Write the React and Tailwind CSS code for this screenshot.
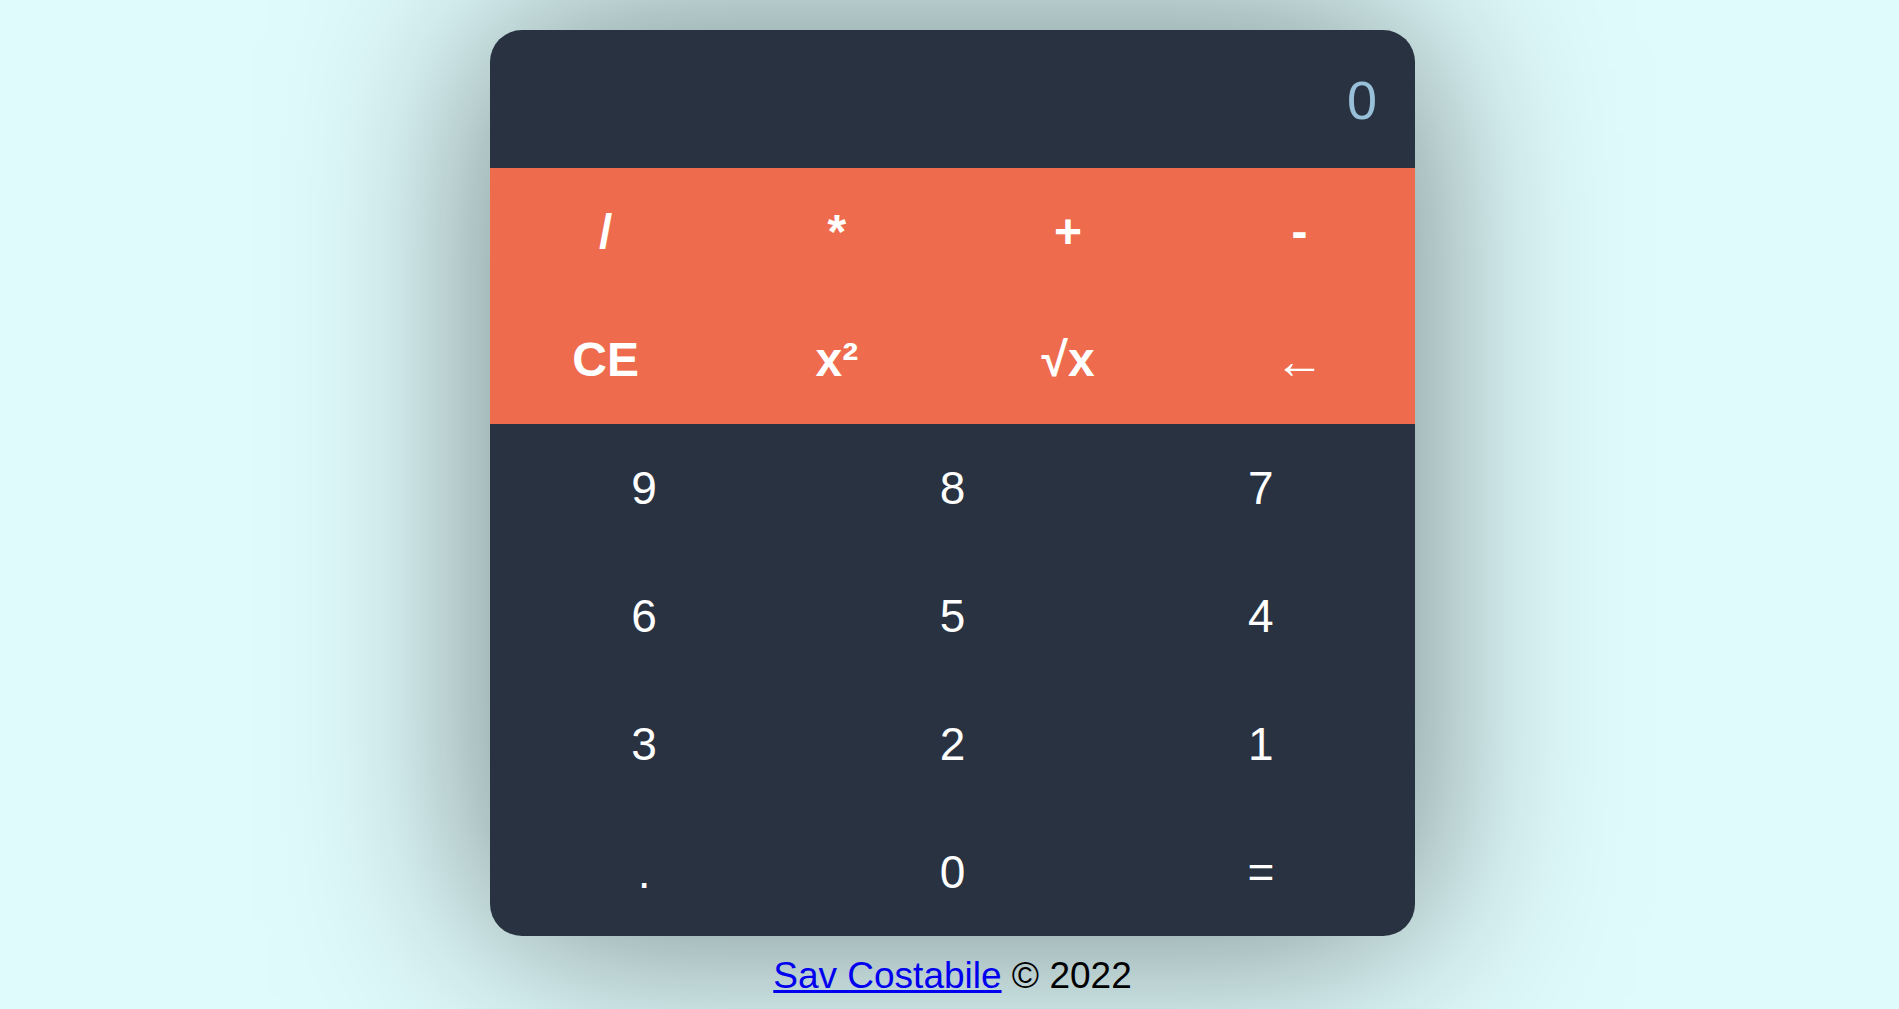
import React from "react";

const ops1 = ["/", "*", "+", "-"];
const ops2 = ["CE", "x²", "√x", "←"];
const digits = ["9", "8", "7", "6", "5", "4", "3", "2", "1", ".", "0", "="];

export default function App() {
  return (
    <div
      className="min-h-screen w-full bg-[#e0fbfc] overflow-hidden"
      style={{ fontFamily: '"Liberation Sans", Arial, sans-serif' }}
    >
      <div className="flex flex-col items-center pt-[30px] pl-[6px]">
        <div className="w-[925px] rounded-[32px] bg-[#293241] overflow-hidden shadow-[0_0_200px_rgba(0,0,0,0.5)]">
          <div className="h-[138px] flex items-center justify-end pr-[38px] pt-[2px]">
            <span className="text-[54px] leading-none text-[#98c1d9] font-normal">0</span>
          </div>
          <div className="bg-[#ee6c4d] grid grid-cols-4">
            {ops1.concat(ops2).map((o) => (
              <button
                key={o}
                className="h-[128px] flex items-center justify-center text-white font-bold text-[48px] leading-none"
              >
                {o === "←" ? (
                  <span className="font-normal text-[50px] pt-[2px]">←</span>
                ) : (
                  o
                )}
              </button>
            ))}
          </div>
          <div className="grid grid-cols-3">
            {digits.map((d) => (
              <button
                key={d}
                className="h-[128px] flex items-center justify-center text-white text-[46px] leading-none"
              >
                {d}
              </button>
            ))}
          </div>
        </div>
        <p className="mt-[19px] text-[37px] text-black leading-[1.15]">
          <a href="#" className="text-[#0000ee] underline">
            Sav Costabile
          </a>{" "}
          © 2022
        </p>
      </div>
    </div>
  );
}
